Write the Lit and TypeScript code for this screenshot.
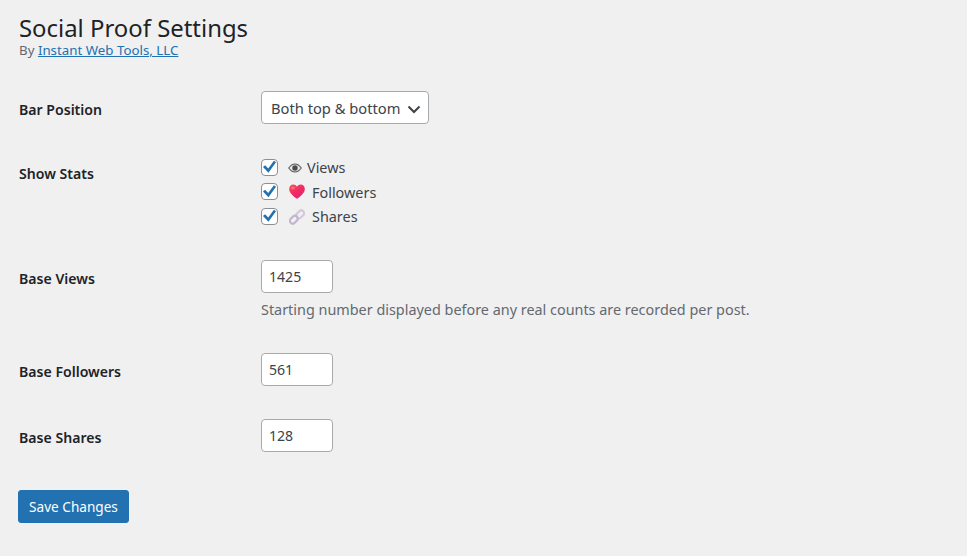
import { LitElement, html, css } from 'lit';
import { customElement } from 'lit/decorators.js';

const eye = html`<svg class="ico eye" viewBox="0 0 14 10" width="14" height="10">
  <path d="M.8 5C2.6 2.3 4.7 1 7 1s4.400 1.300 6.200 4C11.400 7.700 9.300 9 7 9S2.600 7.700.8 5z" fill="#e8e8e8" stroke="#555" stroke-width="1.100"/>
  <circle cx="7" cy="5" r="2.700" fill="#4a4a4a"/>
</svg>`;

const heart = html`<svg class="ico heart" viewBox="0 0 16 15" width="16" height="15">
  <defs>
    <linearGradient id="hg" x1="0" y1="0" x2="0.700" y2="1">
      <stop offset="0" stop-color="#f4505a"/><stop offset="0.550" stop-color="#f02c62"/><stop offset="1" stop-color="#e81f78"/>
    </linearGradient>
  </defs>
  <path d="M8 14.800C3.500 11.400.2 8.600.2 4.900.2 2.300 2.100.5 4.200.5 5.800.5 7.200 1.400 8 2.800 8.800 1.400 10.200.5 11.800.5c2.100 0 4 1.800 4 4.400 0 3.700-3.300 6.500-7.800 9.900z" fill="url(#hg)"/>
  <ellipse cx="4" cy="4" rx="2" ry="1.500" fill="#ff8a8a" opacity="0.600"/>
</svg>`;

const link = html`<svg class="ico link" viewBox="0 0 16 16" width="16" height="16" fill="none">
  <rect x="8.400" y="1" width="5.600" height="8.600" rx="2.800" transform="rotate(45 11.200 5.300)" stroke="#d6c8dc" stroke-width="2.200"/>
  <rect x="2" y="6.400" width="5.600" height="8.600" rx="2.800" transform="rotate(45 4.800 10.700)" stroke="#c3b4cf" stroke-width="2.200"/>
</svg>`;

@customElement('app-root')
export class AppRoot extends LitElement {
  static styles = css`
    :host {
      display: block;
      min-height: 556px;
      box-sizing: border-box;
      background: #f0f0f1;
      padding: 12px 18px 0 19px;
      font-family: 'Noto Sans', 'Open Sans', sans-serif;
      font-size: 14.400px;
      color: #3c434a;
    }
    h1 {
      margin: 0;
      font-size: 23.900px;
      font-weight: 400;
      line-height: 31px;
      color: #1d2327;
    }
    .by {
      font-size: 13.300px;
      line-height: 14px;
      color: #646970;
    }
    .by a {
      color: #2271b1;
    }
    .row {
      display: grid;
      grid-template-columns: 242px 1fr;
    }
    .row label.name {
      font-weight: 600;
      color: #1d2327;
      font-size: 14.100px;
      line-height: 20px;
    }
    .position {
      margin-top: 34px;
    }
    .position .name {
      padding-top: 9px;
    }
    .stats {
      margin-top: 34px;
    }
    .stats .name {
      padding-top: 6px;
    }
    .base-views {
      margin-top: 34px;
    }
    .base-followers {
      margin-top: 33px;
    }
    .base-shares {
      margin-top: 33px;
    }
    .base-views .name,
    .base-followers .name,
    .base-shares .name {
      padding-top: 9px;
    }
    .select-wrap {
      position: relative;
      width: 168px;
      height: 33px;
    }
    select {
      appearance: none;
      width: 100%;
      height: 100%;
      box-sizing: border-box;
      background: #fff;
      border: 1px solid #a7aaad;
      border-radius: 4px;
      padding: 0 0 0 9px;
      font: inherit;
      font-size: 14.700px;
      color: #3c434a;
    }
    .chev {
      position: absolute;
      right: 8px;
      top: 14px;
      pointer-events: none;
    }
    .checks {
      display: flex;
      flex-direction: column;
      gap: 6px;
    }
    .check {
      display: flex;
      align-items: center;
      height: 18.500px;
      line-height: 20px;
    }
    .check span {
      padding-top: 2px;
    }
    .box {
      appearance: none;
      margin: 0;
      width: 17px;
      height: 17px;
      box-sizing: border-box;
      background: #fff;
      border: 1px solid #8c8f94;
      border-radius: 4px;
      position: relative;
      flex: none;
    }
    .box:checked::before {
      content: '';
      position: absolute;
      left: 1px;
      top: 1px;
      width: 13px;
      height: 13px;
      background: #2271b1;
      clip-path: polygon(0 48%, 16% 34%, 40% 60%, 84% 0, 100% 12%, 42% 92%);
    }
    .ico {
      flex: none;
    }
    .eye {
      margin: 1px 5px 0 10px;
    }
    .heart {
      margin: 0 7px 0 11px;
    }
    .link {
      margin: 1px 7px 0 11px;
    }
    .num {
      display: block;
      width: 72px;
      height: 33px;
      box-sizing: border-box;
      background: #fff;
      border: 1px solid #a7aaad;
      border-radius: 4px;
      padding: 0 7px;
      font: inherit;
      font-size: 14.100px;
      color: #3c434a;
    }
    .hint {
      margin: 7px 0 0;
      line-height: 20px;
      font-size: 14.400px;
      color: #646970;
    }
    .save {
      display: block;
      margin: 38px 0 0 -1px;
      width: 111px;
      height: 33px;
      background: #2271b1;
      border: 1px solid #2271b1;
      border-radius: 3px;
      color: #fff;
      font: inherit;
      font-size: 13.600px;
      padding: 0;
    }
  `;

  render() {
    return html`
      <h1>Social Proof Settings</h1>
      <div class="by">By <a href="#">Instant Web Tools, LLC</a></div>

      <div class="row position">
        <label class="name">Bar Position</label>
        <div class="select-wrap">
          <select>
            <option>Both top &amp; bottom</option>
          </select>
          <svg class="chev" width="14" height="9" viewBox="0 0 14 9" fill="none">
            <path d="M1.500 1.500 7 7l5.500-5.500" stroke="#3c434a" stroke-width="2"/>
          </svg>
        </div>
      </div>

      <div class="row stats">
        <label class="name">Show Stats</label>
        <div class="checks">
          <label class="check"><input class="box" type="checkbox" checked />${eye}<span>Views</span></label>
          <label class="check"><input class="box" type="checkbox" checked />${heart}<span>Followers</span></label>
          <label class="check"><input class="box" type="checkbox" checked />${link}<span>Shares</span></label>
        </div>
      </div>

      <div class="row base-views">
        <label class="name">Base Views</label>
        <div>
          <input class="num" type="text" value="1425" />
          <p class="hint">Starting number displayed before any real counts are recorded per post.</p>
        </div>
      </div>

      <div class="row base-followers">
        <label class="name">Base Followers</label>
        <input class="num" type="text" value="561" />
      </div>

      <div class="row base-shares">
        <label class="name">Base Shares</label>
        <input class="num" type="text" value="128" />
      </div>

      <button class="save">Save Changes</button>
    `;
  }
}
